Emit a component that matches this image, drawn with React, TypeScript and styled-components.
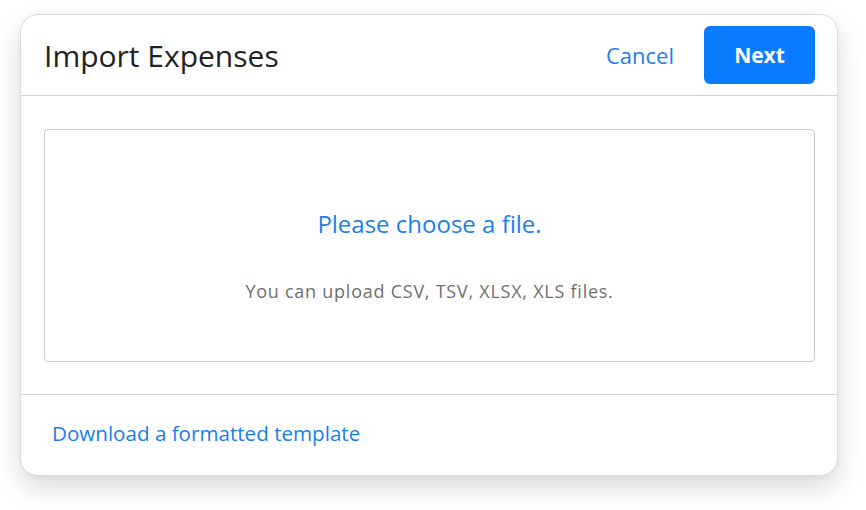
import React from "react";
import styled, { createGlobalStyle } from "styled-components";

const GlobalStyle = createGlobalStyle`
  html, body {
    margin: 0;
    padding: 0;
    background: #ffffff;
    font-family: "Open Sans", Roboto, Arial, sans-serif;
  }
`;

const Page = styled.div`
  min-height: 510px;
  box-sizing: border-box;
  padding: 14px 0 34px 20px;
`;

const Card = styled.div`
  width: 818px;
  height: 462px;
  box-sizing: border-box;
  display: flex;
  flex-direction: column;
  background: #fff;
  border: 1px solid #dcdcdc;
  border-radius: 18px;
  box-shadow: 0 12px 28px rgba(0, 0, 0, 0.14), 0 2px 6px rgba(0, 0, 0, 0.04);
`;

const Header = styled.div`
  height: 81px;
  box-sizing: border-box;
  display: flex;
  align-items: center;
  justify-content: space-between;
  padding: 0 22px 0 23px;
  border-bottom: 1px solid #cfcfcf;
`;

const Title = styled.h1`
  margin: 0;
  font-size: 30px;
  font-weight: 400;
  color: #222;
`;

const Actions = styled.div`
  display: flex;
  align-items: center;
  gap: 30px;
`;

const LinkButton = styled.button`
  border: none;
  background: none;
  padding: 0;
  font-family: inherit;
  font-size: 22px;
  color: #1a80e6;
  cursor: pointer;
`;

const PrimaryButton = styled.button`
  width: 111px;
  height: 58px;
  border: none;
  border-radius: 6px;
  background: #0a7bff;
  color: #fff;
  font-family: inherit;
  font-size: 21px;
  font-weight: 700;
  cursor: pointer;
`;

const Body = styled.div`
  padding: 33px 22px 32px 23px;
  border-bottom: 1px solid #cfcfcf;
`;

const DropZone = styled.div`
  height: 233px;
  box-sizing: border-box;
  border: 1px solid #cbcbcb;
  border-radius: 4px;
  display: flex;
  flex-direction: column;
  align-items: center;
  justify-content: center;
  gap: 39px;
  padding-top: 19px;
`;

const ChooseText = styled.div`
  font-size: 24px;
  color: #1a80e6;
`;

const Hint = styled.div`
  font-size: 18px;
  letter-spacing: 0.75px;
  color: #6f6f6f;
`;

const Footer = styled.div`
  flex: 1;
  display: flex;
  align-items: center;
  padding: 0 31px 4px;
`;

const FooterLink = styled.a`
  font-size: 20.6px;
  color: #1a80e6;
  text-decoration: none;
  cursor: pointer;
`;

export default function App() {
  return (
    <Page>
      <GlobalStyle />
      <Card>
        <Header>
          <Title>Import Expenses</Title>
          <Actions>
            <LinkButton>Cancel</LinkButton>
            <PrimaryButton>Next</PrimaryButton>
          </Actions>
        </Header>
        <Body>
          <DropZone>
            <ChooseText>Please choose a file.</ChooseText>
            <Hint>You can upload CSV, TSV, XLSX, XLS files.</Hint>
          </DropZone>
        </Body>
        <Footer>
          <FooterLink>Download a formatted template</FooterLink>
        </Footer>
      </Card>
    </Page>
  );
}
